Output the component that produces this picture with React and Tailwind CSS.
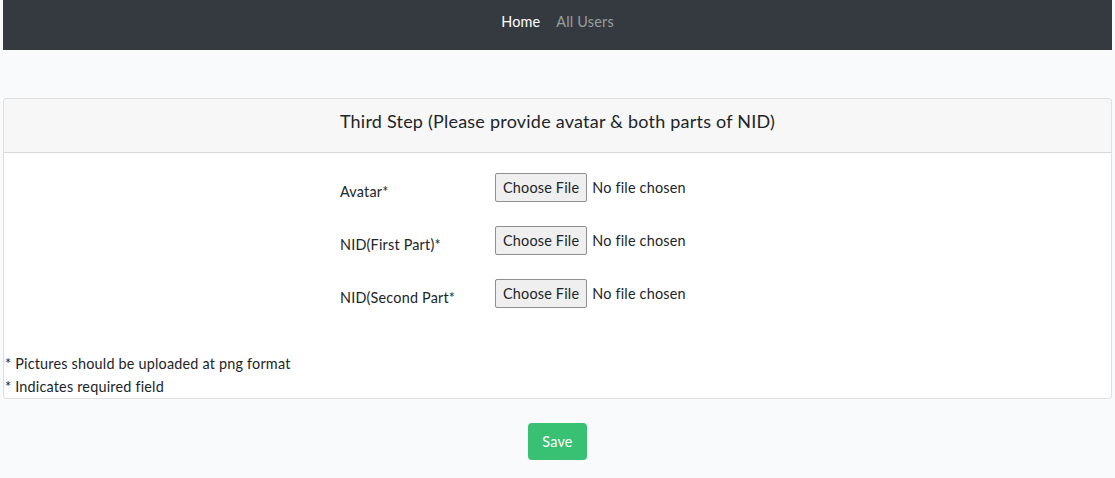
export default function App() {
  const fields = [
    { id: "avatar", label: "Avatar*" },
    { id: "nid_first", label: "NID(First Part)*" },
    { id: "nid_second", label: "NID(Second Part*" },
  ];

  return (
    <div
      className="min-h-[478px] bg-[#f8fafc] text-[#212529] text-[14.4px] leading-[1.6] tracking-[0.2px]"
      style={{ fontFamily: "Lato, 'Noto Sans', sans-serif" }}
    >
      <nav className="mx-[3px] h-[50px] pb-[6px] bg-[#343a40] flex items-center justify-center gap-4">
        <a href="#" className="text-white">Home</a>
        <a href="#" className="text-white/50">All Users</a>
      </nav>

      <form className="mx-[3px] mt-[48px]">
        <div className="bg-white border border-black/[0.125] rounded">
          <div className="h-[54px] pb-[8px] bg-[#f7f7f7] border-b border-black/[0.125] rounded-t flex items-center justify-center">
            <h2 className="text-[18px] tracking-[0.22px] text-[#212529]">
              Third Step (Please provide avatar &amp; both parts of NID)
            </h2>
          </div>

          <div className="pt-[20px] pb-[43px]">
            <div className="mx-auto w-[435px] flex flex-col gap-[23px]">
              {fields.map((f) => (
                <div key={f.id} className="grid grid-cols-[155px_1fr] items-start">
                  <label htmlFor={f.id} className="pt-[7px]">
                    {f.label}
                  </label>
                  <input
                    id={f.id}
                    type="file"
                    className="block text-[14.4px] text-[#212529] file:bg-[#efefef] file:border file:border-[#8f8f8f] file:rounded-[2px] file:px-[7px] file:py-[2px] file:mr-[5px] file:text-[#212529]"
                  />
                </div>
              ))}
            </div>
          </div>

          <div className="pl-[1px]">
            <p>* Pictures should be uploaded at png format</p>
            <p>* Indicates required field</p>
          </div>
        </div>

        <div className="flex justify-center mt-[24px]">
          <button
            type="submit"
            className="bg-[#38c172] text-white rounded px-[14px] h-[37px]"
          >
            Save
          </button>
        </div>
      </form>
    </div>
  );
}
